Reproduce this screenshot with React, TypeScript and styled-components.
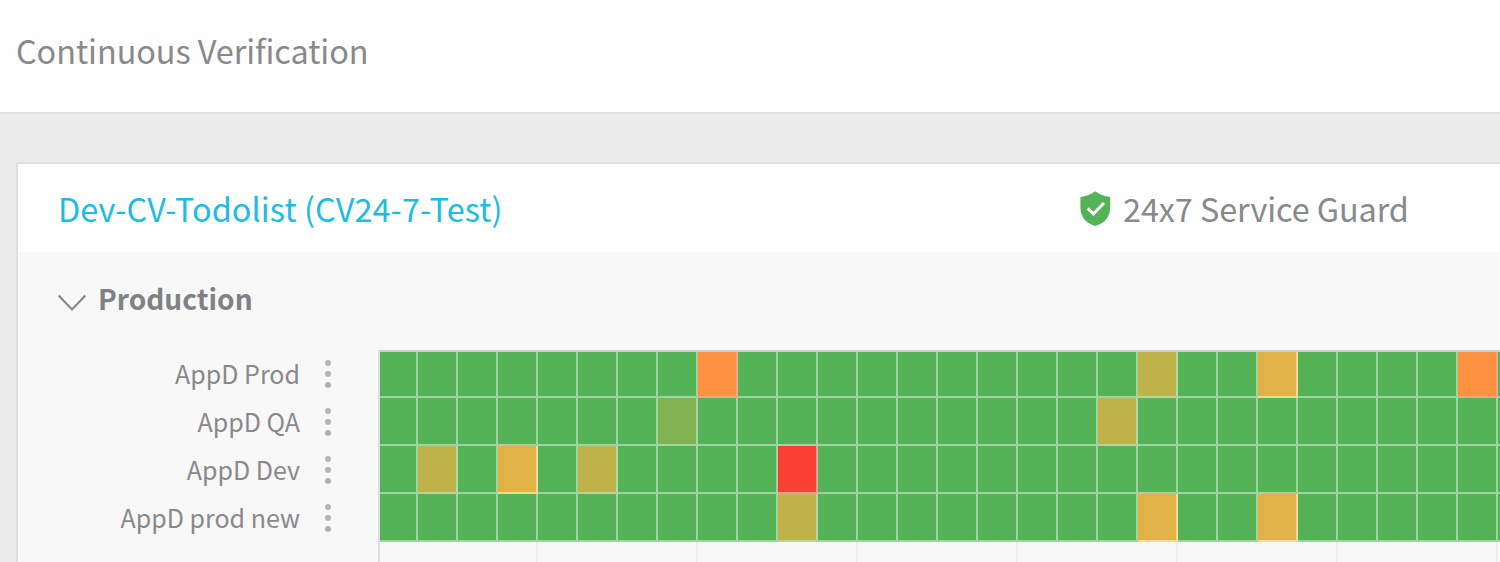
import React from "react";
import styled, { createGlobalStyle } from "styled-components";

const GlobalStyle = createGlobalStyle`
  * { box-sizing: border-box; }
  body {
    margin: 0;
    overflow: hidden;
    background: #ececec;
    color: #88898b;
    font-family: "Noto Sans CJK SC", "Noto Sans", sans-serif;
  }
`;

const Page = styled.div`
  height: 562px;
  overflow: hidden;
`;

const Header = styled.header`
  display: flex;
  align-items: center;
  height: 114px;
  padding: 0 0 12px 16px;
  background: #fefefe;
  border-bottom: 2px solid #e0e0e0;
`;

const Title = styled.h1`
  margin: 0;
  font-size: 32.4px;
  letter-spacing: -0.05px;
  line-height: 48px;
  font-weight: 400;
  white-space: nowrap;
`;

const Card = styled.section`
  width: 1600px;
  height: 500px;
  margin: 48px 0 0 16px;
  background: #f8f8f8;
  border: 2px solid #dfdfdf;
`;

const CardHeader = styled.div`
  display: flex;
  align-items: center;
  height: 88px;
  padding-left: 40px;
  background: #fff;
`;

const ServiceLink = styled.a`
  width: 1022px;
  color: #20bbe3;
  font-size: 32.4px;
  letter-spacing: 0.09px;
  line-height: 48px;
  white-space: nowrap;
`;

const Guard = styled.div`
  display: flex;
  align-items: center;
  gap: 12px;
  font-size: 32.4px;
  letter-spacing: -0.08px;
  line-height: 48px;
  white-space: nowrap;
`;

const Environment = styled.div`
  display: flex;
  align-items: center;
  gap: 12px;
  height: 98px;
  padding-left: 40px;
  color: #808184;
  font-size: 28.1px;
  line-height: 40px;
  font-weight: 700;

  span { padding-bottom: 6px; }
  svg { margin-top: 3px; }
`;

const Monitor = styled.div`
  display: flex;
`;

const Labels = styled.div`
  width: 360px;
  flex: none;
`;

const LabelRow = styled.div`
  display: flex;
  align-items: center;
  justify-content: flex-end;
  height: 48px;
  padding-right: 46px;
  gap: 24px;
  font-size: 25px;
  line-height: 36px;
  white-space: nowrap;

  span { padding-bottom: 2px; }
`;

const Chart = styled.div`
  flex: none;
  width: 1240px;
  height: 240px;
  border-left: 2px solid #dfdfdf;
`;

const HeatRow = styled.div<{ $first?: boolean }>`
  display: flex;
  height: 48px;
  border-top: ${(p) => (p.$first ? "2px solid #c5d5c5" : "none")};
`;

const Cell = styled.div<{ $fill: string; $edge: string }>`
  flex: none;
  width: 40px;
  background: ${(p) => p.$fill};
  border-right: 2px solid ${(p) => p.$edge};
  border-bottom: 2px solid ${(p) => p.$edge};
  &:first-child { width: 38px; }
`;

const Ticks = styled.div`
  display: flex;
  height: 48px;
`;

const Tick = styled.div`
  flex: none;
  width: 160px;
  border-right: 2px solid #eee;
  &:first-child { width: 158px; }
`;

type Level = "ok" | "low" | "mid" | "warn" | "high" | "critical";

const palette: Record<Level, [string, string]> = {
  ok: ["#55b357", "#a0d5a1"],
  low: ["#82b352", "#a5d6a4"],
  mid: ["#beb249", "#b5d69f"],
  warn: ["#e1b246", "#ffd891"],
  high: ["#ff9040", "#ffa08c"],
  critical: ["#f94033", "#ff9a8e"],
};

const services: { name: string; events: Record<number, Level> }[] = [
  { name: "AppD Prod", events: { 8: "high", 19: "mid", 22: "warn", 27: "high" } },
  { name: "AppD QA", events: { 7: "low", 18: "mid" } },
  { name: "AppD Dev", events: { 1: "mid", 3: "warn", 5: "mid", 10: "critical" } },
  { name: "AppD prod new", events: { 10: "mid", 19: "warn", 22: "warn" } },
];

const columns = Array.from({ length: 30 }, (_, i) => i);

const ShieldIcon = () => (
  <svg width="31" height="36" viewBox="0 0 31 36">
    <path d="M15.3 1.2 C11.5 4 6 6.4 0.4 7 V17.5 C0.4 26.5 6 33.5 15.3 36 C24.6 33.5 30.2 26.5 30.2 17.5 V7 C24.6 6.4 19 4 15.3 1.2Z" fill="#55b357" />
    <path d="M7.8 18.3 L13.5 23.8 L24 13" fill="none" stroke="#fff" strokeWidth="3" />
  </svg>
);

const ChevronIcon = () => (
  <svg width="28" height="18" viewBox="0 0 28 18">
    <path d="M0.7 1.5 L14 15.5 L27.3 1.5" fill="none" stroke="#858688" strokeWidth="2" />
  </svg>
);

const MoreIcon = () => (
  <svg width="8" height="30" viewBox="0 0 8 30">
    <circle cx="4" cy="4" r="3" fill="#b3b4b5" />
    <circle cx="4" cy="15" r="3" fill="#b3b4b5" />
    <circle cx="4" cy="26" r="3" fill="#b3b4b5" />
  </svg>
);

export default function App() {
  return (
    <Page>
      <GlobalStyle />
      <Header>
        <Title>Continuous Verification</Title>
      </Header>
      <Card>
        <CardHeader>
          <ServiceLink>Dev-CV-Todolist (CV24-7-Test)</ServiceLink>
          <Guard>
            <ShieldIcon />
            <span>24x7 Service Guard</span>
          </Guard>
        </CardHeader>
        <Environment>
          <ChevronIcon />
          <span>Production</span>
        </Environment>
        <Monitor>
          <Labels>
            {services.map((s) => (
              <LabelRow key={s.name}>
                <span>{s.name}</span>
                <MoreIcon />
              </LabelRow>
            ))}
          </Labels>
          <Chart>
            {services.map((s, row) => (
              <HeatRow key={s.name} $first={row === 0}>
                {columns.map((c) => {
                  const [fill, edge] = palette[s.events[c] ?? "ok"];
                  return <Cell key={c} $fill={fill} $edge={edge} />;
                })}
              </HeatRow>
            ))}
            <Ticks>
              {columns.slice(0, 8).map((c) => (
                <Tick key={c} />
              ))}
            </Ticks>
          </Chart>
        </Monitor>
      </Card>
    </Page>
  );
}
